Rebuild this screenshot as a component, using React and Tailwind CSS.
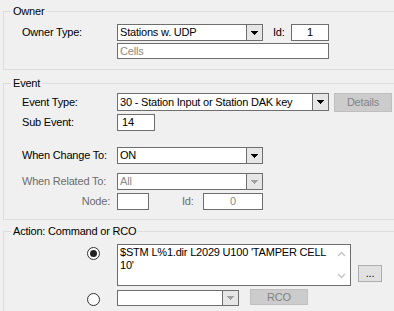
import React from "react";

const Arrow = ({ gray }) => (
  <svg width="7" height="4" viewBox="0 0 7 4" shapeRendering="crispEdges">
    <rect x="0" y="0" width="7" height="1" fill={gray ? "#a0a0a0" : "#000"} />
    <rect x="1" y="1" width="5" height="1" fill={gray ? "#a0a0a0" : "#000"} />
    <rect x="2" y="2" width="3" height="1" fill={gray ? "#a0a0a0" : "#000"} />
    <rect x="3" y="3" width="1" height="1" fill={gray ? "#a0a0a0" : "#000"} />
  </svg>
);

const Combo = ({ w, h = "h-[17px]", text, gray, extra = "" }) => (
  <div className={`flex ${w} ${h} border border-[#6e6e6e] bg-white ${extra}`}>
    <div className={`flex-1 flex items-center pl-[2px] overflow-hidden whitespace-nowrap ${gray ? "text-[#8a8a8a]" : "text-black"}`}>
      {text}
    </div>
    <div className="w-[16px] border-l border-[#6e6e6e] bg-[#e6e6e6] flex items-center justify-center">
      <Arrow gray={gray} />
    </div>
  </div>
);

const Box = ({ w, h = "h-[17px]", text, center, gray, extra = "" }) => (
  <div
    className={`flex items-center ${w} ${h} border border-[#6e6e6e] bg-white ${center ? "justify-center" : "pl-[4px]"} ${gray ? "text-[#8a8a8a]" : "text-black"} ${extra}`}
  >
    {text}
  </div>
);

const DisBtn = ({ w, h, text, extra = "" }) => (
  <div className={`flex items-center justify-center ${w} ${h} border border-[#bfbfbf] bg-[#cccccc] text-[#838383] ${extra}`}>
    {text}
  </div>
);

const Radio = ({ checked, extra = "" }) => (
  <div className={`w-[13px] h-[13px] rounded-full border border-[#333] bg-white flex items-center justify-center shrink-0 ${extra}`}>
    {checked && <div className="w-[7px] h-[7px] rounded-full bg-[#222]" />}
  </div>
);

const Group = ({ title, children, extra }) => (
  <div className={`relative ml-[3px] w-[400px] border border-[#dcdcdc] ${extra}`}>
    <span className="absolute left-[7px] top-[-7px] px-[2px] bg-[#f0f0f0] leading-[13px] text-black">
      {title}
    </span>
    {children}
  </div>
);

export default function App() {
  return (
    <div
      className="w-[394px] h-[311px] overflow-hidden bg-[#f0f0f0] text-[11px] leading-[13px] tracking-[-0.2px] pt-[11px]"
      style={{ fontFamily: '"Liberation Sans", Arial, sans-serif' }}
    >
      <Group title="Owner" extra="h-[59px]">
        <div className="flex items-center mt-[12px] pl-[18px]">
          <div className="w-[95px]">Owner Type:</div>
          <Combo w="w-[146px]" text="Stations w. UDP" />
          <div className="w-[18px] ml-[10px]">Id:</div>
          <Box w="w-[38px]" text="1" center />
        </div>
        <div className="flex mt-[2px] pl-[113px]">
          <Box w="w-[212px]" h="h-[16px]" text="Cells" gray extra="!pl-[2px]" />
        </div>
      </Group>

      <Group title="Event" extra="h-[137px] mt-[13px]">
        <div className="flex items-start mt-[9px] pl-[18px]">
          <div className="w-[95px] h-[18px] flex items-center">Event Type:</div>
          <Combo w="w-[212px]" h="h-[18px]" text="30 - Station Input or Station DAK key" />
          <DisBtn w="w-[58px]" h="h-[19px]" text="Details" extra="ml-[5px]" />
        </div>
        <div className="flex items-center mt-[2px] pl-[18px]">
          <div className="w-[95px]">Sub Event:</div>
          <Box w="w-[38px]" text="14" />
        </div>
        <div className="flex items-center mt-[16px] pl-[18px]">
          <div className="w-[95px]">When Change To:</div>
          <Combo w="w-[146px]" text="ON" />
        </div>
        <div className="flex items-center mt-[9px] pl-[18px]">
          <div className="w-[95px] text-[#6d6d6d]">When Related To:</div>
          <Combo w="w-[146px]" text="All" gray />
        </div>
        <div className="flex items-center mt-[3px] pl-[18px]">
          <div className="w-[88px] text-right text-[#6d6d6d]">Node:</div>
          <Box w="w-[32px]" text="" extra="ml-[7px]" />
          <div className="w-[21px] ml-[33px] text-[#6d6d6d]">Id:</div>
          <Box w="w-[60px]" text="0" center gray />
        </div>
      </Group>

      <Group title="Action: Command or RCO" extra="h-[100px] mt-[11px]">
        <div className="flex items-start mt-[12px] pl-[83px]">
          <Radio checked extra="mt-[3px]" />
          <div className="ml-[17px] w-[234px] h-[42px] border border-[#6e6e6e] bg-white flex">
            <div className="flex-1 pl-[2px] pt-[1px] leading-[13px] whitespace-nowrap">
              <div>$STM L%1.dir L2029 U100 'TAMPER CELL</div>
              <div>10'</div>
            </div>
            <div className="w-[17px] flex flex-col items-center justify-between py-[6px]">
              <svg width="9" height="6" viewBox="0 0 9 6">
                <path d="M1 5 L4.5 1.5 L8 5" stroke="#c2c2c2" strokeWidth="1.3" fill="none" />
              </svg>
              <svg width="9" height="6" viewBox="0 0 9 6">
                <path d="M1 1 L4.5 4.5 L8 1" stroke="#c2c2c2" strokeWidth="1.3" fill="none" />
              </svg>
            </div>
          </div>
          <div className="ml-[7px] mt-[21px] w-[24px] h-[17px] border border-[#adadad] bg-[#e1e1e1] flex items-center justify-center text-black">
            ...
          </div>
        </div>
        <div className="flex items-start mt-[3px] pl-[83px]">
          <Radio extra="mt-[4px]" />
          <Combo w="w-[122px]" h="h-[16px]" text="" gray extra="ml-[17px] mt-[1px]" />
          <DisBtn w="w-[58px]" h="h-[16px]" text="RCO" extra="ml-[11px]" />
        </div>
      </Group>
    </div>
  );
}
